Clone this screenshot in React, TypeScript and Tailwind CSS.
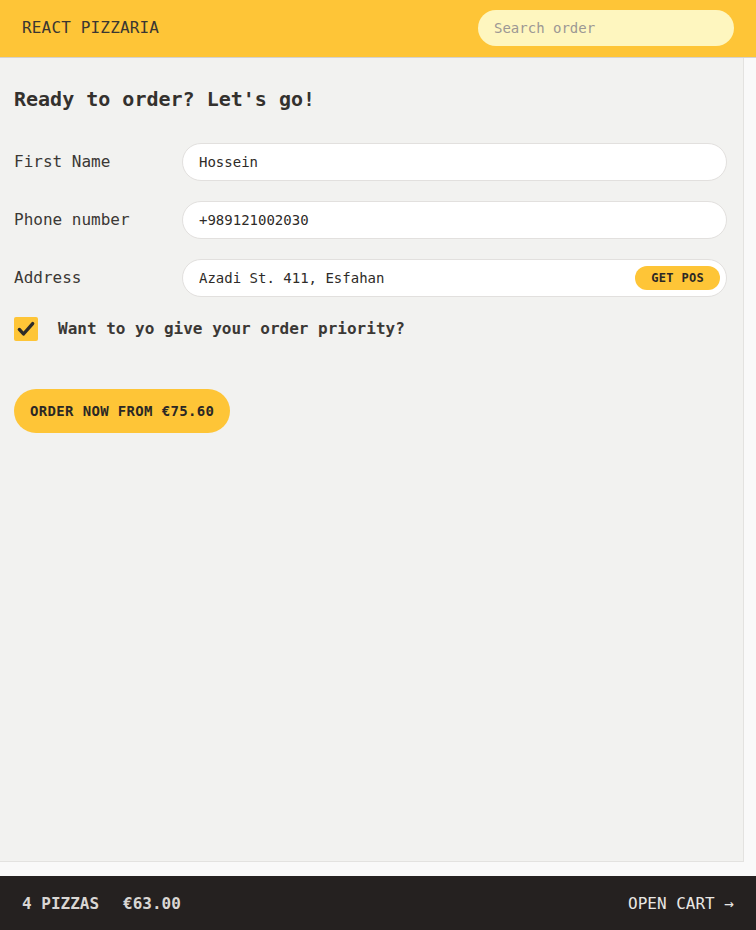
import { useState } from "react";

const mono = "font-['DejaVu_Sans_Mono','Liberation_Mono',monospace]";

function Field({ label, value, children }: { label: string; value: string; children?: React.ReactNode }) {
  return (
    <div className="mb-5 flex items-center">
      <label className="basis-[168px] shrink-0 text-base text-[#3b3835]">{label}</label>
      <div className="relative grow">
        <input
          defaultValue={value}
          className="w-full rounded-full border border-[#e2e0de] bg-white px-4 py-2 text-sm text-[#2e2b28] outline-none"
        />
        {children}
      </div>
    </div>
  );
}

export default function App() {
  const [priority, setPriority] = useState(true);

  return (
    <div className={`${mono} flex h-screen flex-col bg-[#f9f9f9] text-[#3b3835]`}>
      {/* Header */}
      <header className="flex h-[58px] shrink-0 items-center justify-between border-b border-[#d4d2d0] bg-[#fec537] px-[22px] pb-[1px]">
        <span className="text-base tracking-[0.01em] text-[#3a3632]">REACT PIZZARIA</span>
        <input
          placeholder="Search order"
          className="w-64 rounded-full bg-[#fef6bf] px-4 py-2 text-sm text-[#3a3632] outline-none placeholder:text-[#9c9894]"
        />
      </header>

      {/* Main */}
      <div className="flex min-h-0 grow flex-col">
        <main className="mr-[12px] mb-[14px] grow border-r border-b border-[#e3e2e0] bg-[#f2f2f0] pl-[14px] pr-[16px] pt-[27px]">
          <h2 className="mb-[30px] text-xl font-bold text-[#34312e]">Ready to order? Let's go!</h2>

          <form onSubmit={(e) => e.preventDefault()}>
            <Field label="First Name" value="Hossein" />
            <Field label="Phone number" value="+989121002030" />
            <Field label="Address" value="Azadi St. 411, Esfahan">
              <button
                type="button"
                className="absolute right-[7px] top-1/2 -translate-y-1/2 rounded-full bg-[#fec537] px-4 py-1 text-xs font-semibold tracking-wide text-[#2b2825]"
              >
                GET POS
              </button>
            </Field>

            <div className="mb-12 flex items-center gap-5">
              <button
                type="button"
                onClick={() => setPriority(!priority)}
                className="flex h-6 w-6 items-center justify-center rounded-[2px] bg-[#fec537]"
              >
                {priority && (
                  <svg viewBox="0 0 24 24" className="h-5 w-5" fill="none">
                    <path d="M4 12.5l5 5.5L20 5.5" stroke="#2e2b28" strokeWidth="4" strokeLinecap="round" strokeLinejoin="round" />
                  </svg>
                )}
              </button>
              <span className="text-base font-semibold text-[#3b3835]">Want to yo give your order priority?</span>
            </div>

            <button className="rounded-full bg-[#fec537] px-4 py-3 text-sm font-semibold tracking-wide text-[#2b2825]">
              ORDER NOW FROM €75.60
            </button>
          </form>
        </main>
      </div>

      {/* Cart overview */}
      <footer className="flex h-[54px] shrink-0 items-center justify-between bg-[#252120] px-[22px] pt-[2px] text-base">
        <p className="flex gap-6 font-semibold text-[#d9d6d3]">
          <span>4 PIZZAS</span>
          <span>€63.00</span>
        </p>
        <a href="#" className="text-[#e9e7e4]">OPEN CART →</a>
      </footer>
    </div>
  );
}
